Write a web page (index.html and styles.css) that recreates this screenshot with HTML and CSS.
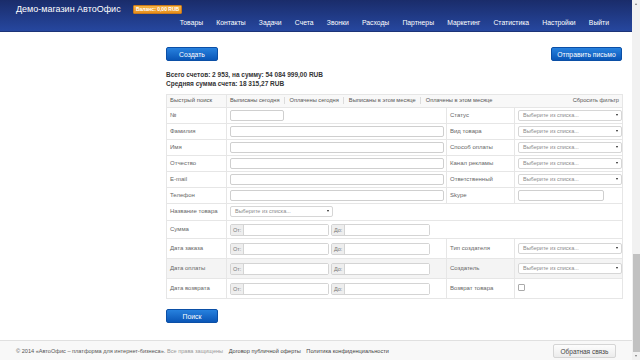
FILE: index.html
```html
<!DOCTYPE html>
<html lang="ru">
<head>
  <meta charset="UTF-8">
  <title>Счета — Демо-магазин АвтоОфис</title>
  <link rel="stylesheet" href="styles.css">
</head>
<body>
<div class="page">
  <header class="topbar">
    <div class="brand-row">
      <span class="brand">Демо-магазин АвтоОфис</span>
      <span class="balance">Баланс: 0,00 RUB</span>
    </div>
    <nav class="menu">
      <a>Товары</a>
      <a>Контакты</a>
      <a>Задачи</a>
      <a>Счета</a>
      <a>Звонки</a>
      <a>Расходы</a>
      <a>Партнеры</a>
      <a>Маркетинг</a>
      <a>Статистика</a>
      <a>Настройки</a>
      <a>Выйти</a>
    </nav>
  </header>

  <main class="content">
    <div class="actions">
      <button class="btn">Создать</button>
      <button class="btn wide">Отправить письмо</button>
    </div>

    <div class="totals">
      <p>Всего счетов: 2 953, на сумму: 54 084 999,00 RUB</p>
      <p>Средняя сумма счета: 18 315,27 RUB</p>
    </div>

    <table class="filter">
      <colgroup>
        <col class="c-label"><col class="c-field"><col class="c-label2"><col class="c-field2">
      </colgroup>
      <tr class="quick">
        <td>Быстрый поиск</td>
        <td colspan="3">
          <div class="quick-links">
            <a>Выписаны сегодня</a>
            <a>Оплачены сегодня</a>
            <a>Выписаны в этом месяце</a>
            <a>Оплачены в этом месяце</a>
            <a class="reset">Сбросить фильтр</a>
          </div>
        </td>
      </tr>
      <tr>
        <td>№</td>
        <td><input class="inp short" type="text"></td>
        <td>Статус</td>
        <td><div class="select">Выберите из списка...<i class="caret"></i></div></td>
      </tr>
      <tr>
        <td>Фамилия</td>
        <td><input class="inp" type="text"></td>
        <td>Вид товара</td>
        <td><div class="select">Выберите из списка...<i class="caret"></i></div></td>
      </tr>
      <tr>
        <td>Имя</td>
        <td><input class="inp" type="text"></td>
        <td>Способ оплаты</td>
        <td><div class="select">Выберите из списка...<i class="caret"></i></div></td>
      </tr>
      <tr>
        <td>Отчество</td>
        <td><input class="inp" type="text"></td>
        <td>Канал рекламы</td>
        <td><div class="select">Выберите из списка...<i class="caret"></i></div></td>
      </tr>
      <tr>
        <td>E-mail</td>
        <td><input class="inp" type="text"></td>
        <td>Ответственный</td>
        <td><div class="select">Выберите из списка...<i class="caret"></i></div></td>
      </tr>
      <tr>
        <td>Телефон</td>
        <td><input class="inp" type="text"></td>
        <td>Skype</td>
        <td><input class="inp skype" type="text"></td>
      </tr>
      <tr class="goods-row">
        <td>Название товара</td>
        <td colspan="3"><div class="select goods">Выберите из списка...<i class="caret"></i></div></td>
      </tr>
      <tr class="range-row sum">
        <td>Сумма</td>
        <td colspan="3">
          <div class="range">
            <div class="group"><span class="addon">От:</span><input type="text"></div>
            <div class="group"><span class="addon">До:</span><input type="text"></div>
          </div>
        </td>
      </tr>
      <tr class="range-row">
        <td>Дата заказа</td>
        <td>
          <div class="range">
            <div class="group"><span class="addon">От:</span><input type="text"></div>
            <div class="group"><span class="addon">До:</span><input type="text"></div>
          </div>
        </td>
        <td>Тип создателя</td>
        <td><div class="select">Выберите из списка...<i class="caret"></i></div></td>
      </tr>
      <tr class="range-row hover">
        <td>Дата оплаты</td>
        <td>
          <div class="range">
            <div class="group"><span class="addon">От:</span><input type="text"></div>
            <div class="group"><span class="addon">До:</span><input type="text"></div>
          </div>
        </td>
        <td>Создатель</td>
        <td><div class="select">Выберите из списка...<i class="caret"></i></div></td>
      </tr>
      <tr class="range-row">
        <td>Дата возврата</td>
        <td>
          <div class="range">
            <div class="group"><span class="addon">От:</span><input type="text"></div>
            <div class="group"><span class="addon">До:</span><input type="text"></div>
          </div>
        </td>
        <td>Возврат товара</td>
        <td><span class="check"></span></td>
      </tr>
    </table>

    <button class="btn">Поиск</button>
  </main>

  <footer class="footer">
    <div class="copy">
      © 2014 «АвтоОфис – платформа для интернет-бизнеса». <span class="muted">Все права защищены</span>
      <a>Договор публичной оферты</a>
      <a>Политика конфиденциальности</a>
    </div>
    <button class="feedback">Обратная связь</button>
  </footer>
</div>

<div class="scrollbar">
  <span class="arrow up"></span>
  <div class="track"></div>
  <div class="thumb"></div>
  <span class="arrow down"></span>
</div>
</body>
</html>
```

FILE: styles.css
```css
body{
  margin: 0;
  display: flex;
  height: 360px;
  overflow: hidden;
  font-family: "Liberation Sans", Arial, sans-serif;
  background: #fff;
  color: #555;
}
.page{
  flex: 1;
  display: flex;
  flex-direction: column;
  min-width: 0;
}

/* header */
.topbar{
  height: 32px;
  box-sizing: border-box;
  padding: 4px 23px 0 16px;
  background: linear-gradient(#1a2c6a, #26479f);
  border-bottom: 1px solid #1c3478;
  color: #fff;
}
.brand-row{
  display: flex;
  align-items: center;
  height: 10px;
}
.brand{
  font-size: 9px;
  width: 117px;
}
.balance{
  background: linear-gradient(#f7b545, #e8901d);
  border: 1px solid #c9781a;
  border-radius: 1px;
  color: #fff;
  font-size: 5px;
  font-weight: bold;
  line-height: 7px;
  padding: 0 2px;
}
.menu{
  display: flex;
  justify-content: flex-end;
  margin-top: 4px;
}
.menu a{
  font-size: 6.8px;
  padding: 0 6.6px;
  line-height: 10px;
}
.menu a:last-child{
  padding-right: 0;
}

/* content */
.content{
  flex: 1;
  padding: 15px 0 0 166px;
  width: 456px;
}
.actions{
  display: flex;
  justify-content: space-between;
}
.btn{
  display: block;
  height: 14px;
  width: 52px;
  padding: 0 6px;
  border: 1px solid #0b4fa6;
  border-radius: 2px;
  background: linear-gradient(#2781de, #0a56b7);
  color: #fff;
  font-family: inherit;
  font-size: 6.8px;
  white-space: nowrap;
}
.btn.wide{
  width: 71px;
  padding: 0;
}
.totals{
  margin: 10px 0 6px;
  color: #333;
  font-weight: bold;
  font-size: 6.5px;
}
.totals p{
  margin: 0;
  line-height: 8.5px;
}

/* filter table */
.filter{
  width: 456px;
  table-layout: fixed;
  border-collapse: collapse;
  border: 1px solid #e2e2e2;
  font-size: 6px;
  margin-bottom: 10px;
}
.c-label{ width: 60px; }
.c-field{ width: 220px; }
.c-label2{ width: 68px; }
.c-field2{ width: 108px; }
.filter td{
  border: 1px solid #e6e6e6;
  padding: 2px 3px;
  vertical-align: top;
  line-height: 11px;
  white-space: nowrap;
  color: #666;
}
.filter .quick td{
  background: #f8f8f8;
  padding: 2px 3px 3px;
  line-height: 7px;
  color: #555;
}
.quick-links{
  display: flex;
  font-size: 5.7px;
}
.quick-links a{
  padding: 0 4.5px;
  border-left: 1px solid #dcdcdc;
}
.quick-links a:first-child{
  padding-left: 0;
  border-left: 0;
}
.quick-links a.reset{
  margin-left: auto;
  border-left: 0;
  padding-right: 0;
}
.inp{
  display: block;
  box-sizing: border-box;
  width: 214px;
  height: 11px;
  margin: 0;
  border: 1px solid #cfcfcf;
  border-radius: 2px;
  background: #fff;
}
.inp.short{ width: 54px; }
.inp.skype{ width: 86px; }
.select{
  position: relative;
  box-sizing: border-box;
  width: 104px;
  height: 11px;
  padding-left: 4px;
  border: 1px solid #d6d6d6;
  border-radius: 2px;
  background: #fff;
  color: #8a8a8a;
  font-size: 5.5px;
  line-height: 9px;
}
.goods-row td{
  padding: 2px 3px 3px;
}
.select.goods{
  width: 103px;
}
.caret{
  position: absolute;
  right: 3px;
  top: 3px;
  border-left: 1.5px solid transparent;
  border-right: 1.5px solid transparent;
  border-top: 2.5px solid #222;
}
.range-row td{
  padding: 4px 3px 3px;
}
.range-row.sum td{
  padding: 3px 3px 2px;
}
.hover td{
  background: #f4f4f4;
}
.range{
  display: flex;
  gap: 2px;
}
.group{
  display: flex;
  height: 12px;
  box-sizing: border-box;
  border: 1px solid #d4d4d4;
  border-radius: 2px;
  background: #fff;
}
.addon{
  width: 13px;
  padding-left: 2px;
  box-sizing: border-box;
  background: #eee;
  border-right: 1px solid #d4d4d4;
  color: #777;
  font-size: 5.5px;
  line-height: 10px;
}
.group input{
  width: 84px;
  border: 0;
  padding: 0;
  margin: 0;
  background: #fff;
}
.check{
  display: inline-block;
  width: 5px;
  height: 5px;
  margin: 1px 0 0 0;
  border: 1px solid #aaa;
  border-radius: 1px;
  vertical-align: top;
}

/* footer */
.footer{
  height: 20px;
  box-sizing: border-box;
  border-top: 1px solid #e0e0e0;
  background: #f8f8f8;
  display: flex;
  align-items: center;
  justify-content: space-between;
  padding: 1px 16px 0 16px;
}
.copy{
  font-size: 5.6px;
  color: #555;
}
.copy .muted{
  color: #999;
  margin-right: 4px;
}
.copy a{
  color: #444;
  margin-right: 4px;
}
.feedback{
  width: 63px;
  height: 14px;
  border: 1px solid #d5d5d5;
  border-radius: 2px;
  background: linear-gradient(#fdfdfd, #ececec);
  font-family: inherit;
  font-size: 6.5px;
  color: #444;
  padding: 0;
}

/* fake scrollbar */
.scrollbar{
  width: 8px;
  background: #f1f1f1;
  display: flex;
  flex-direction: column;
  align-items: center;
}
.track{
  flex: 1;
}
.thumb{
  width: 7px;
  height: 98px;
  background: #c1c1c1;
}
.arrow{
  width: 0;
  height: 0;
  margin: 3px 0;
  border-left: 1.5px solid transparent;
  border-right: 1.5px solid transparent;
}
.arrow.up{ border-bottom: 2px solid #777; }
.arrow.down{ border-top: 2px solid #777; }
```
